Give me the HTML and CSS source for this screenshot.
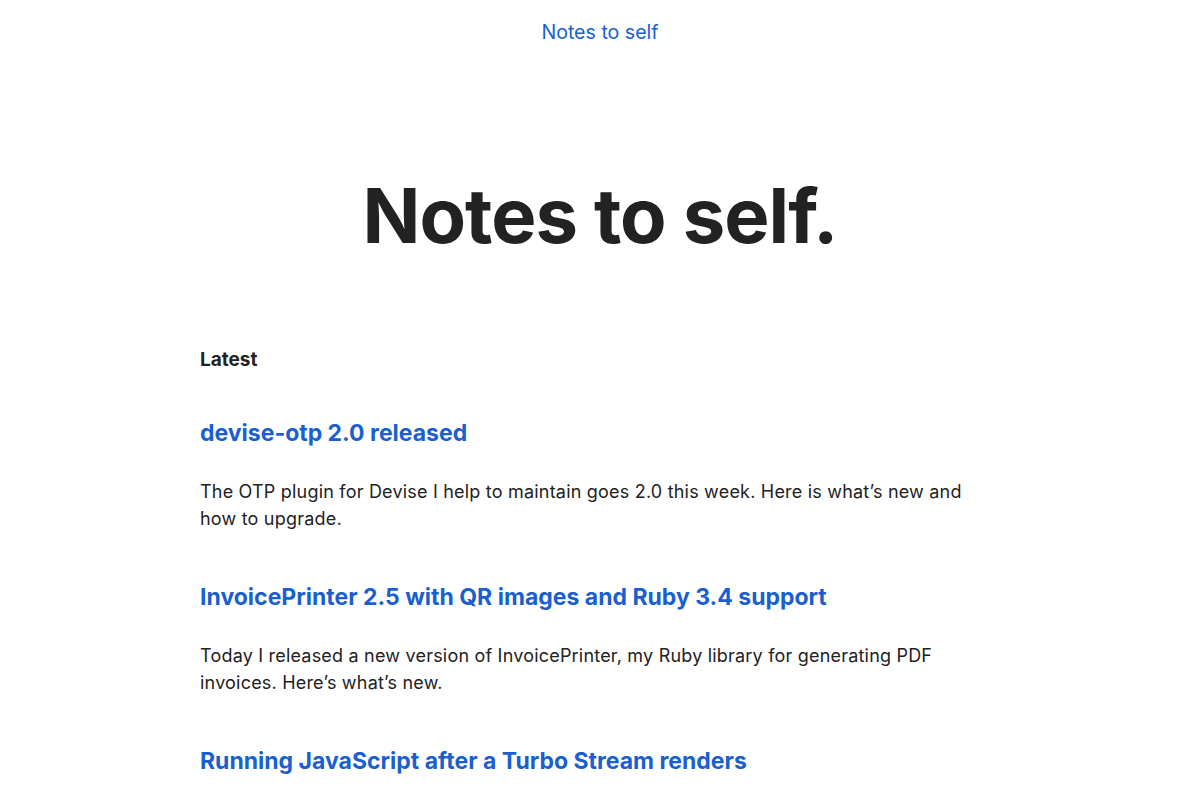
FILE: index.html
```html
<!DOCTYPE html>
<html lang="en">
<head>
    <meta charset="UTF-8">
    <meta name="viewport" content="width=device-width, initial-scale=1.0">
    <title>Notes to self</title>
    <link rel="stylesheet" href="styles.css">
</head>
<body>
    <nav class="topbar">
        <a href="#" class="site-link">Notes to self</a>
    </nav>

    <header class="hero">
        <h1>Notes to self.</h1>
    </header>

    <main class="content">
        <h2 class="section-label">Latest</h2>

        <article class="post">
            <h3><a href="#">devise-otp 2.0 released</a></h3>
            <p>The OTP plugin for Devise I help to maintain goes 2.0 this week. Here is what’s new and how to upgrade.</p>
        </article>

        <article class="post">
            <h3><a href="#">InvoicePrinter 2.5 with QR images and Ruby 3.4 support</a></h3>
            <p>Today I released a new version of InvoicePrinter, my Ruby library for generating PDF invoices. Here’s what’s new.</p>
        </article>

        <article class="post">
            <h3><a href="#">Running JavaScript after a Turbo Stream renders</a></h3>
        </article>
    </main>
</body>
</html>
```

FILE: styles.css
```css
body {
    margin: 0;
    background-color: #fff;
    color: #222;
    font-family: Inter, "Open Sans", sans-serif;
}

a {
    color: #1a5fd1;
    text-decoration: none;
}

.topbar {
    display: flex;
    justify-content: center;
    padding-top: 19px;
}

.site-link {
    font-size: 19.6px;
    line-height: 26px;
}

.hero {
    display: flex;
    justify-content: center;
    padding-top: 124px;
}

.hero h1 {
    margin: 0;
    font-size: 76px;
    line-height: 92px;
    font-weight: 700;
    letter-spacing: -1px;
    color: #222;
}

.content {
    width: 800px;
    margin: 0 auto;
    padding-top: 86px;
}

.section-label {
    margin: 0;
    font-size: 19px;
    line-height: 26px;
    font-weight: 700;
}

.post h3 {
    margin: 43px 0 0;
    font-size: 23px;
    line-height: 34px;
    font-weight: 700;
}

.post p {
    margin: 28px 0 0;
    font-size: 18px;
    line-height: 27px;
    letter-spacing: 0.2px;
}

.post + .post h3 {
    margin-top: 48px;
}
```
